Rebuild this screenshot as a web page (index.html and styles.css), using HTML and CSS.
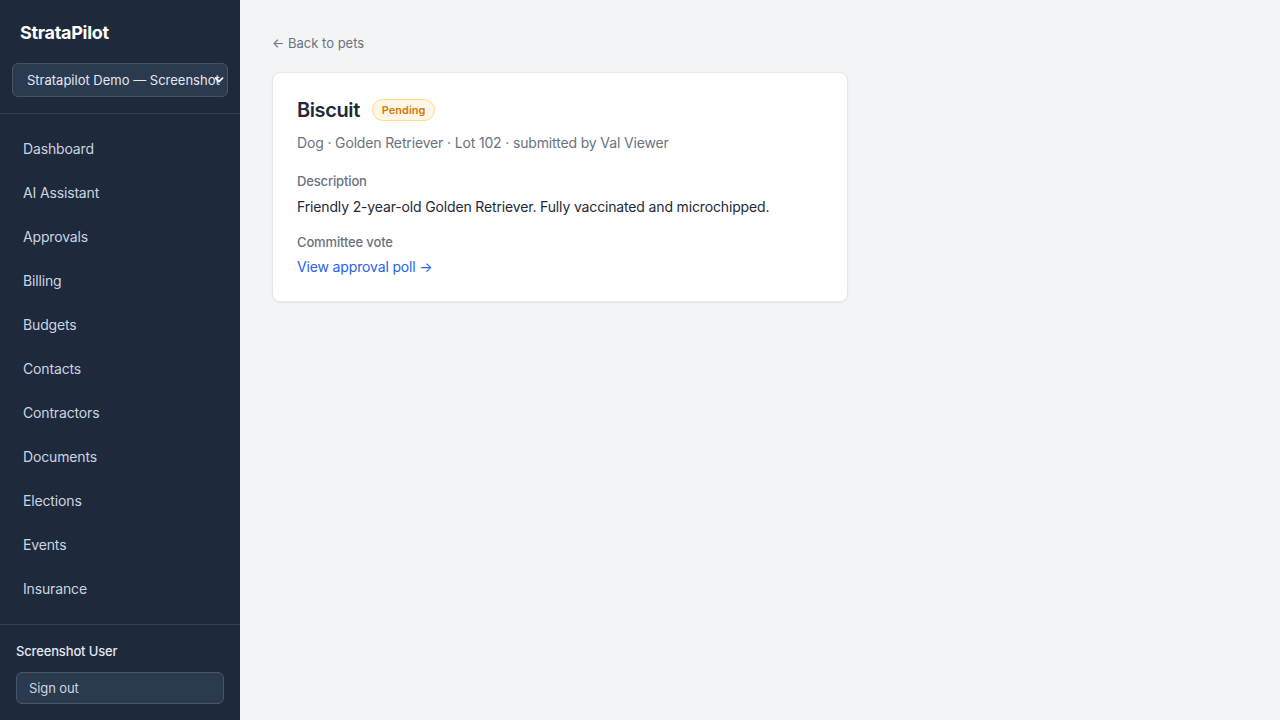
FILE: index.html
```html
<!DOCTYPE html>
<html lang="en">
<head>
<meta charset="utf-8">
<title>Biscuit · StrataPilot</title>
<link rel="stylesheet" href="styles.css">
</head>
<body>
<div class="app">
  <aside class="sidebar">
    <div class="brand">StrataPilot</div>
    <div class="org-wrap">
      <div class="org-select">
        <span class="org-name">Stratapilot Demo — Screenshot</span>
        <svg class="chev" width="10" height="8" viewBox="0 0 10 8" aria-hidden="true"><path d="M1.5 2.2 L5 5.7 L8.5 2.2" fill="none" stroke="#f1f5f9" stroke-width="1.9" stroke-linecap="round" stroke-linejoin="round"/></svg>
      </div>
    </div>
    <nav class="nav">
      <a href="#">Dashboard</a>
      <a href="#">AI Assistant</a>
      <a href="#">Approvals</a>
      <a href="#">Billing</a>
      <a href="#">Budgets</a>
      <a href="#">Contacts</a>
      <a href="#">Contractors</a>
      <a href="#">Documents</a>
      <a href="#">Elections</a>
      <a href="#">Events</a>
      <a href="#">Insurance</a>
    </nav>
    <div class="user">
      <div class="user-name">Screenshot User</div>
      <button class="signout">Sign out</button>
    </div>
  </aside>
  <main class="main">
    <a class="back" href="#">← Back to pets</a>
    <section class="card">
      <div class="title-row">
        <h1>Biscuit</h1>
        <span class="badge">Pending</span>
      </div>
      <p class="meta">Dog · Golden Retriever · Lot 102 · submitted by Val Viewer</p>
      <div class="field">
        <div class="label">Description</div>
        <p class="value">Friendly 2-year-old Golden Retriever. Fully vaccinated and microchipped.</p>
      </div>
      <div class="field">
        <div class="label">Committee vote</div>
        <a class="link" href="#">View approval poll →</a>
      </div>
    </section>
  </main>
</div>
</body>
</html>
```
FILE: styles.css
```css
* { box-sizing: border-box; }
html, body { margin: 0; height: 100%; }
body {
  font-family: Inter, "Noto Sans", "Liberation Sans", sans-serif;
  background: #f3f4f6;
  color: #1f2937;
  letter-spacing: -0.15px;
}
.app { display: flex; height: 720px; }

.sidebar {
  width: 240px;
  flex-shrink: 0;
  background: #1e293b;
  color: #e2e8f0;
  display: flex;
  flex-direction: column;
}
.brand {
  font-size: 18px;
  font-weight: 700;
  color: #ffffff;
  padding: 22px 20px 0;
  line-height: 22px;
  letter-spacing: -0.3px;
}
.org-wrap {
  padding: 19px 12px 16px;
  border-bottom: 1px solid #334155;
}
/* custom select: the native text runs under the chevron */
.org-select {
  position: relative;
  width: 216px;
  height: 34px;
  background: #2b3a4f;
  border: 1px solid #475569;
  border-radius: 6px;
  display: flex;
  align-items: center;
  padding: 0 4px 0 14px;
  overflow: hidden;
}
.org-name {
  white-space: nowrap;
  font-size: 13px;
  color: #e2e8f0;
  letter-spacing: 0;
}
.chev {
  position: absolute;
  right: 3px;
  top: 12px;
}
.nav {
  flex: 1;
  display: flex;
  flex-direction: column;
  padding: 13px 12px 0;
}
.nav a {
  display: block;
  height: 44px;
  line-height: 44px;
  padding: 0 11px;
  font-size: 14px;
  color: #cbd5e1;
  text-decoration: none;
}
.user {
  border-top: 1px solid #334155;
  padding: 18px 16px 16px;
}
.user-name {
  font-size: 13px;
  font-weight: 500;
  color: #e2e8f0;
  line-height: 16px;
  margin-bottom: 13px;
}
.signout {
  width: 208px;
  height: 32px;
  background: #2b3a4f;
  border: 1px solid #475569;
  border-radius: 6px;
  color: #cbd5e1;
  font-family: inherit;
  font-size: 13px;
  letter-spacing: -0.1px;
  text-align: left;
  padding: 0 12px;
}

.main {
  flex: 1;
  padding: 35px 32px;
}
.back {
  display: block;
  font-size: 13px;
  color: #6b7280;
  text-decoration: none;
  line-height: 16px;
  margin-bottom: 21px;
  letter-spacing: 0;
}
.card {
  width: 576px;
  background: #ffffff;
  border: 1px solid #e5e7eb;
  border-radius: 8px;
  box-shadow: 0 1px 2px rgba(0,0,0,0.05);
  padding: 24px 24px 24px;
}
.title-row {
  display: flex;
  align-items: center;
  gap: 12px;
}
h1 {
  margin: 0;
  font-size: 20px;
  font-weight: 600;
  line-height: 26px;
  color: #1f2937;
  letter-spacing: -0.4px;
}
.badge {
  font-size: 11px;
  font-weight: 600;
  color: #d97706;
  background: #fff7e6;
  border: 1px solid #fcdd8a;
  border-radius: 999px;
  padding: 3px 9px;
  line-height: 14px;
  letter-spacing: 0;
}
.meta {
  margin: 10px 0 0;
  font-size: 14px;
  color: #6b7280;
  line-height: 20px;
}
.field { margin-top: 20px; }
.field + .field { margin-top: 17px; }
.label {
  font-size: 13px;
  font-weight: 500;
  color: #6b7280;
  line-height: 16px;
}
.value {
  margin: 8px 0 0;
  font-size: 14px;
  line-height: 20px;
  color: #1f2937;
}
.link {
  display: inline-block;
  margin-top: 7px;
  font-size: 14px;
  line-height: 20px;
  color: #2563eb;
  text-decoration: none;
}
```
